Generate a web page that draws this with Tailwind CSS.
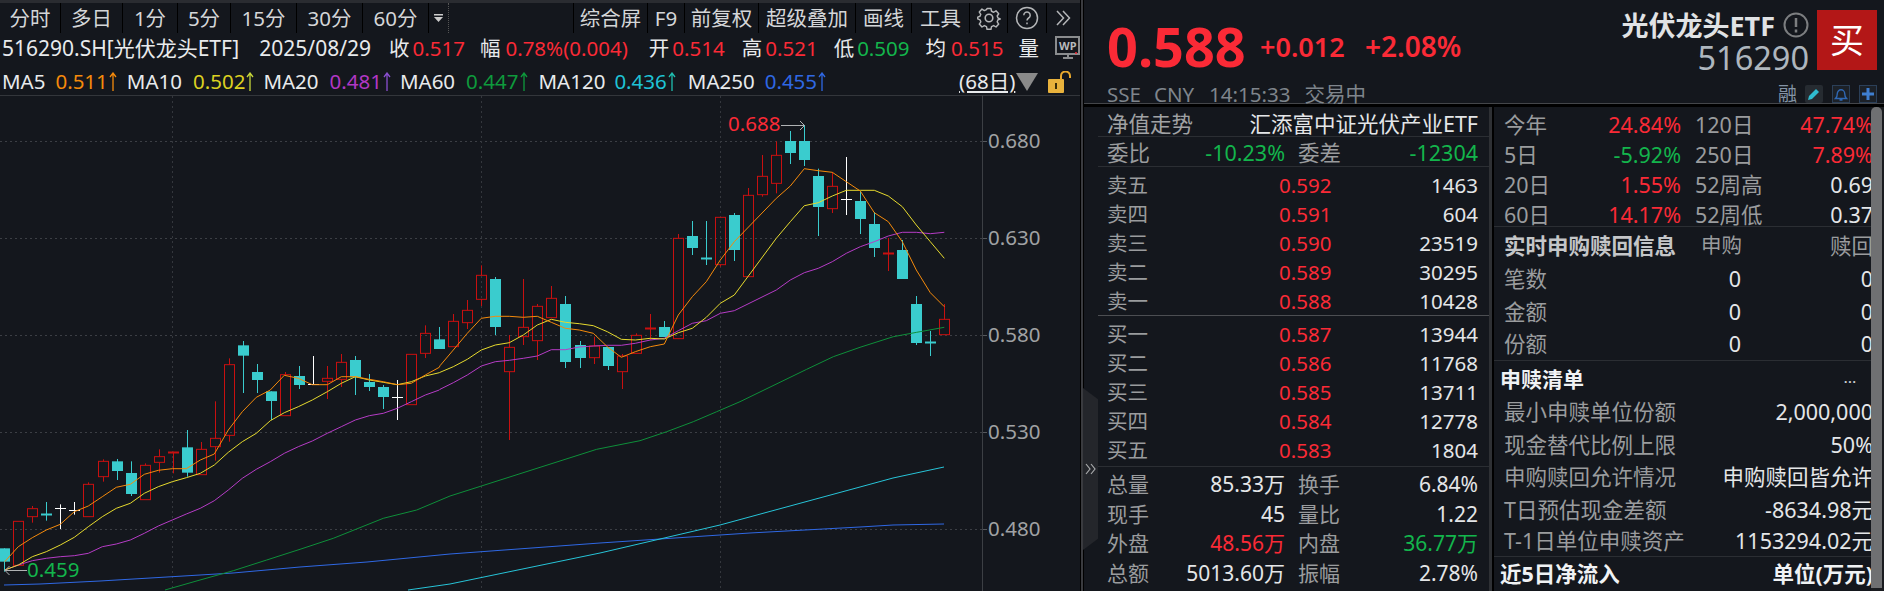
<!DOCTYPE html>
<html lang="zh-CN">
<head>
  <meta charset="UTF-8">
  <title>光伏龙头ETF 516290</title>
  <script src="https://cdn.jsdelivr.net/npm/@tailwindcss/browser@4"></script>
</head>
<body class="bg-[#14171d] text-[#e4e6e8] text-[20.5px] leading-none font-['Noto_Sans','Noto_Sans_CJK_SC',sans-serif] overflow-hidden">
<div class="flex w-[1884px] h-[591px] overflow-hidden">

  <!-- 左侧 K线区 -->
  <div class="w-[1080px] shrink-0 flex flex-col">
    <div class="h-[3px] shrink-0 bg-[#2a2c31]"></div>
    <!-- 工具栏 -->
    <div class="h-[30px] shrink-0 flex items-stretch text-[#d4d6d8] text-center">
      <div class="w-[61px] border-r border-black flex items-center justify-center">分时</div>
      <div class="w-[62px] border-r border-black flex items-center justify-center">多日</div>
      <div class="w-[55px] border-r border-black flex items-center justify-center">1分</div>
      <div class="w-[53px] border-r border-black flex items-center justify-center">5分</div>
      <div class="w-[66px] border-r border-black flex items-center justify-center">15分</div>
      <div class="w-[66px] border-r border-black flex items-center justify-center">30分</div>
      <div class="w-[66px] border-r border-black flex items-center justify-center">60分</div>
      <div class="w-[20px] border-r border-dotted border-[#555] flex items-center justify-center">
        <svg width="9" height="9" viewBox="0 0 9 9"><path d="M0 0h9v1.500H0z" fill="#ccc"/><path d="M0 3h9L4.500 8z" fill="#ccc"/></svg>
      </div>
      <div class="w-[124px]"></div>
      <div class="w-[75px] border-x border-black flex items-center justify-center">综合屏</div>
      <div class="w-[37px] border-r border-black flex items-center justify-center">F9</div>
      <div class="w-[74px] border-r border-black flex items-center justify-center">前复权</div>
      <div class="w-[97px] border-r border-black flex items-center justify-center">超级叠加</div>
      <div class="w-[56px] border-r border-black flex items-center justify-center">画线</div>
      <div class="w-[58px] border-r border-black flex items-center justify-center">工具</div>
      <div class="w-[38px] border-r border-black flex items-center justify-center">
        <svg width="24" height="24" viewBox="0 0 24 24" fill="none" stroke="#b4b6b8" stroke-width="1.600" stroke-linejoin="round"><path d="M9.800 1.500h4.400l.6 3 2.400 1.100 2.600-1.600 3 3.300-1.700 2.500.9 2.200 2.500.9v.2l-2.500.9-.9 2.200 1.700 2.500-3 3.300-2.600-1.600-2.400 1.100-.6 3H9.800l-.6-3-2.400-1.100-2.600 1.600-3-3.300 1.700-2.500-.9-2.200L-.5 13v-2l2.500-.9.900-2.200-1.700-2.500 3-3.300 2.600 1.600 2.400-1.100z" transform="translate(1.200 1.200) scale(.9)"/><circle cx="12" cy="12" r="3.800"/></svg>
      </div>
      <div class="w-[39px] border-r border-black flex items-center justify-center">
        <svg width="24" height="24" viewBox="0 0 24 24" fill="none" stroke="#b4b6b8" stroke-width="1.500"><circle cx="12" cy="12" r="10.500"/><path d="M8.800 9.200a3.200 3.200 0 1 1 4.800 2.800c-1.100.7-1.600 1.200-1.600 2.600"/><path d="M12 16.500v1.800"/></svg>
      </div>
      <div class="flex-1 flex items-center pl-[8px]">
        <svg width="16" height="16" viewBox="0 0 16 16" fill="none" stroke="#b4b6b8" stroke-width="1.500"><path d="M2 1l6.500 7L2 15M8 1l6.500 7L8 15"/></svg>
      </div>
    </div>
    <!-- 行情信息 -->
    <div class="h-[31px] shrink-0 flex items-center text-[#e8eaec] whitespace-nowrap pl-[2px]">
      <span class="text-[21px]">516290.SH[光伏龙头ETF]</span>
      <span class="ml-[20px] text-[21px]">2025/08/29</span>
      <span class="ml-[18px]">收</span><span class="ml-[3px] text-[#fa2a36]">0.517</span>
      <span class="ml-[15px]">幅</span><span class="ml-[5px] text-[#fa2a36]">0.78%(0.004)</span>
      <span class="ml-[21px]">开</span><span class="ml-[3px] text-[#fa2a36]">0.514</span>
      <span class="ml-[17px]">高</span><span class="ml-[3px] text-[#fa2a36]">0.521</span>
      <span class="ml-[16px]">低</span><span class="ml-[3px] text-[#13b54c]">0.509</span>
      <span class="ml-[16px]">均</span><span class="ml-[5px] text-[#fa2a36]">0.515</span>
      <span class="ml-[15px]">量</span>
      <svg class="ml-[16px] shrink-0" width="28" height="26" viewBox="0 0 28 26"><rect x="1" y="1" width="23" height="17" fill="none" stroke="#8a8c8e" stroke-width="2"/><text x="4" y="14" font-size="11" font-weight="700" fill="#b8babc">WP</text><path d="M8 22h10M13 18v4" stroke="#8a8c8e" stroke-width="2"/><circle cx="21" cy="17" r="1" fill="#fa2a36"/><circle cx="26" cy="17" r="1" fill="#fa2a36"/></svg>
    </div>
    <div class="h-[31px] shrink-0 flex items-center text-[#e8eaec] whitespace-nowrap pl-[2px] pt-[4px]">
      <span>MA5</span><span class="ml-[10px] text-[#f58a0b]">0.511</span><svg class="shrink-0" width="10" height="19" viewBox="0 0 10 19" fill="none" stroke="#f58a0b" stroke-width="1.300"><path d="M5 1v18M2 5l3-4 3 4"/></svg>
      <span class="ml-[9px]">MA10</span><span class="ml-[11px] text-[#dcd121]">0.502</span><svg class="shrink-0" width="10" height="19" viewBox="0 0 10 19" fill="none" stroke="#c6d63a" stroke-width="1.300"><path d="M5 1v18M2 5l3-4 3 4"/></svg>
      <span class="ml-[8px]">MA20</span><span class="ml-[11px] text-[#b237c4]">0.481</span><svg class="shrink-0" width="10" height="19" viewBox="0 0 10 19" fill="none" stroke="#8a4fd0" stroke-width="1.300"><path d="M5 1v18M2 5l3-4 3 4"/></svg>
      <span class="ml-[8px]">MA60</span><span class="ml-[11px] text-[#0e9a3c]">0.447</span><svg class="shrink-0" width="10" height="19" viewBox="0 0 10 19" fill="none" stroke="#0e9a3c" stroke-width="1.300"><path d="M5 1v18M2 5l3-4 3 4"/></svg>
      <span class="ml-[10px]">MA120</span><span class="ml-[9px] text-[#1fc3d6]">0.436</span><svg class="shrink-0" width="10" height="19" viewBox="0 0 10 19" fill="none" stroke="#1fbfb0" stroke-width="1.300"><path d="M5 1v18M2 5l3-4 3 4"/></svg>
      <span class="ml-[11px]">MA250</span><span class="ml-[10px] text-[#2f68e4]">0.455</span><svg class="shrink-0" width="10" height="19" viewBox="0 0 10 19" fill="none" stroke="#2f68e4" stroke-width="1.300"><path d="M5 1v18M2 5l3-4 3 4"/></svg>
      <span class="ml-[132px] underline underline-offset-2">(68日)</span>
      <svg class="ml-[1px] shrink-0" width="22" height="18" viewBox="0 0 22 18"><path d="M0 0h22L11 18z" fill="#8a8a8a"/></svg>
      <svg class="ml-[10px] shrink-0" width="24" height="22" viewBox="0 0 24 22"><rect x="0" y="8" width="16" height="14" rx="1" fill="#e9b23c"/><rect x="7" y="12" width="2" height="6" fill="#3a2c08"/><path d="M13 9V5a4.500 4.500 0 0 1 9 0v2" fill="none" stroke="#e9a92e" stroke-width="2"/></svg>
    </div>
    <!-- K线图 -->
    <div class="relative flex-1">
      <svg id="chart" class="absolute left-0 top-0" width="1080" height="496" viewBox="0 95 1080 496"></svg>
    </div>
  </div>

  <!-- 分隔条 -->
  <div class="w-[1px] bg-black shrink-0"></div>
  <div class="w-[2px] bg-[#3a3b3f] shrink-0"></div>
  <div class="w-[1px] bg-black shrink-0"></div>

  <!-- 右侧盘口 -->
  <div class="relative flex-1 flex flex-col min-w-0">
    <div class="absolute left-[-1px] top-[388px] w-[15px] h-[162px] bg-[#24262b] [clip-path:polygon(0_0,100%_7%,100%_93%,0_100%)] flex items-center justify-center">
      <svg width="11" height="12" viewBox="0 0 11 12" fill="none" stroke="#a8aaac" stroke-width="1.200"><path d="M1 1l4 5-4 5M6 1l4 5-4 5"/></svg>
    </div>

    <!-- 头部 -->
    <div class="h-[103px] flex border-b border-[#44464a] box-content">
      <div class="pl-[23px] w-[520px] shrink-0">
        <div class="h-[77px] flex items-center text-[#fa2a36] font-bold whitespace-nowrap pt-[15px]">
          <span class="text-[54px] w-[153px]">0.588</span>
          <span class="text-[27px] font-semibold w-[105px]">+0.012</span>
          <span class="text-[28px] font-semibold">+2.08%</span>
        </div>
        <div class="flex items-center h-[26px] text-[#7f858c] whitespace-nowrap pt-[9px]">
          <span>SSE</span><span class="ml-[13px]">CNY</span><span class="ml-[15px]">14:15:33</span><span class="ml-[14px]">交易中</span>
        </div>
      </div>
      <div class="flex-1 flex justify-end relative pr-[7px]">
        <div class="flex flex-col items-end pr-[8px]">
          <div class="flex items-center h-[46px] pt-[4px]">
            <span class="text-[27px] font-bold text-[#e0e2e4]">光伏龙头ETF</span>
            <svg class="ml-[8px]" width="26" height="26" viewBox="0 0 26 26" fill="none" stroke="#7c7e80" stroke-width="2"><circle cx="13" cy="13" r="11.500"/><path d="M13 6v9M13 17.500v3" stroke-width="2.500"/></svg>
          </div>
          <div class="text-[32.5px] text-[#aeb6be] h-[28px] flex items-center mt-[-2px]">516290</div>
        </div>
        <div class="mt-[10px] w-[60px] h-[60px] bg-[#b31717] text-white text-[34px] flex items-center justify-center">买</div>
        <div class="absolute right-[7px] top-[85px] flex items-center h-[18px]">
          <span class="text-[#8494a6] text-[19px] mr-[8px]">融</span>
          <div class="w-[18px] h-[18px] bg-[#262b31] rounded-[2px] flex items-center justify-center">
            <svg width="14" height="14" viewBox="0 0 14 14"><path d="M1 13l1-4 7-7 3 3-7 7z" fill="#2fbcd0"/></svg>
          </div>
          <div class="ml-[9px] w-[18px] h-[18px] bg-[#1c2128] border border-[#2b3f58] flex items-center justify-center">
            <svg width="14" height="14" viewBox="0 0 14 14" fill="none" stroke="#2f68b4" stroke-width="1.400"><path d="M1.500 11.500h11c-1.500-1.500-1.800-3-1.800-5a3.700 3.700 0 0 0-7.400 0c0 2-.3 3.500-1.800 5zM5.500 13h3"/></svg>
          </div>
          <div class="ml-[9px] w-[18px] h-[18px] bg-[#1c2128] border border-[#2b3f58] flex items-center justify-center">
            <svg width="14" height="14" viewBox="0 0 14 14"><path d="M5.500 1h3v4.500H13v3H8.500V13h-3V8.500H1v-3h4.500z" fill="#3f7fd0"/></svg>
          </div>
        </div>
      </div>
    </div>
    <div class="h-[3px] bg-black"></div>

    <div class="flex flex-1 min-h-0">
      <!-- 五档盘口 -->
      <div class="w-[391px] ml-[14px] shrink-0 text-[#e4e6e8]">
        <div class="h-[30px] border-b border-[#2b2e33] flex items-center justify-between pl-[9px] pr-[11px] pt-[4px] text-[21.5px]">
          <span class="text-[#a0a2a4]">净值走势</span><span>汇添富中证光伏产业ETF</span>
        </div>
        <div class="h-[30px] border-b border-[#2b2e33] grid grid-cols-[178px_1fr] items-center pl-[9px] pr-[11px] pt-[3px] text-[21.5px]">
          <div class="flex justify-between"><span class="text-[#9a9c9e]">委比</span><span class="text-[#13b54c]">-10.23%</span></div>
          <div class="flex justify-between pl-[13px]"><span class="text-[#9a9c9e]">委差</span><span class="text-[#13b54c]">-12304</span></div>
        </div>
        <div class="pt-[4px] h-[149px] border-b border-[#4c4e52]">
          <div class="h-[29px] flex items-center pl-[9px] pr-[11px]"><span class="w-[172px] text-[#9a9c9e]">卖五</span><span class="text-[#fa2a36] w-[60px]">0.592</span><span class="flex-1 text-right">1463</span></div>
          <div class="h-[29px] flex items-center pl-[9px] pr-[11px]"><span class="w-[172px] text-[#9a9c9e]">卖四</span><span class="text-[#fa2a36] w-[60px]">0.591</span><span class="flex-1 text-right">604</span></div>
          <div class="h-[29px] flex items-center pl-[9px] pr-[11px]"><span class="w-[172px] text-[#9a9c9e]">卖三</span><span class="text-[#fa2a36] w-[60px]">0.590</span><span class="flex-1 text-right">23519</span></div>
          <div class="h-[29px] flex items-center pl-[9px] pr-[11px]"><span class="w-[172px] text-[#9a9c9e]">卖二</span><span class="text-[#fa2a36] w-[60px]">0.589</span><span class="flex-1 text-right">30295</span></div>
          <div class="h-[29px] flex items-center pl-[9px] pr-[11px]"><span class="w-[172px] text-[#9a9c9e]">卖一</span><span class="text-[#fa2a36] w-[60px]">0.588</span><span class="flex-1 text-right">10428</span></div>
        </div>
        <div class="pt-[4px] h-[151px] border-b border-[#2b2e33]">
          <div class="h-[29px] flex items-center pl-[9px] pr-[11px]"><span class="w-[172px] text-[#9a9c9e]">买一</span><span class="text-[#fa2a36] w-[60px]">0.587</span><span class="flex-1 text-right">13944</span></div>
          <div class="h-[29px] flex items-center pl-[9px] pr-[11px]"><span class="w-[172px] text-[#9a9c9e]">买二</span><span class="text-[#fa2a36] w-[60px]">0.586</span><span class="flex-1 text-right">11768</span></div>
          <div class="h-[29px] flex items-center pl-[9px] pr-[11px]"><span class="w-[172px] text-[#9a9c9e]">买三</span><span class="text-[#fa2a36] w-[60px]">0.585</span><span class="flex-1 text-right">13711</span></div>
          <div class="h-[29px] flex items-center pl-[9px] pr-[11px]"><span class="w-[172px] text-[#9a9c9e]">买四</span><span class="text-[#fa2a36] w-[60px]">0.584</span><span class="flex-1 text-right">12778</span></div>
          <div class="h-[29px] flex items-center pl-[9px] pr-[11px]"><span class="w-[172px] text-[#9a9c9e]">买五</span><span class="text-[#fa2a36] w-[60px]">0.583</span><span class="flex-1 text-right">1804</span></div>
        </div>
        <div class="pt-[3px] text-[21px]">
          <div class="h-[29.5px] grid grid-cols-[178px_1fr] items-center pl-[9px] pr-[11px]"><div class="flex justify-between"><span class="text-[#9a9c9e]">总量</span><span>85.33万</span></div><div class="flex justify-between pl-[13px]"><span class="text-[#9a9c9e]">换手</span><span>6.84%</span></div></div>
          <div class="h-[29.5px] grid grid-cols-[178px_1fr] items-center pl-[9px] pr-[11px]"><div class="flex justify-between"><span class="text-[#9a9c9e]">现手</span><span>45</span></div><div class="flex justify-between pl-[13px]"><span class="text-[#9a9c9e]">量比</span><span>1.22</span></div></div>
          <div class="h-[29.5px] grid grid-cols-[178px_1fr] items-center pl-[9px] pr-[11px]"><div class="flex justify-between"><span class="text-[#9a9c9e]">外盘</span><span class="text-[#fa2a36]">48.56万</span></div><div class="flex justify-between pl-[13px]"><span class="text-[#9a9c9e]">内盘</span><span class="text-[#13b54c]">36.77万</span></div></div>
          <div class="h-[29.5px] grid grid-cols-[178px_1fr] items-center pl-[9px] pr-[11px]"><div class="flex justify-between"><span class="text-[#9a9c9e]">总额</span><span>5013.60万</span></div><div class="flex justify-between pl-[13px]"><span class="text-[#9a9c9e]">振幅</span><span>2.78%</span></div></div>
        </div>
      </div>

      <div class="w-[3px] bg-[#2e3034] shrink-0"></div>
      <div class="w-[2px] bg-black shrink-0"></div>

      <!-- 申赎信息 -->
      <div class="w-[377px] shrink-0 overflow-hidden whitespace-nowrap text-[21.5px]">
        <div class="w-[379px]">
          <div class="border-b border-[#2b2e33] h-[120px] pt-[3px]">
            <div class="h-[30px] flex items-center pl-[10px]"><span class="w-[90px] text-[#9a9c9e]">今年</span><span class="w-[87px] text-right text-[#fa2a36]">24.84%</span><span class="ml-[14px] text-[#9a9c9e]">120日</span><span class="flex-1 text-right text-[#fa2a36]">47.74%</span></div>
            <div class="h-[30px] flex items-center pl-[10px]"><span class="w-[90px] text-[#9a9c9e]">5日</span><span class="w-[87px] text-right text-[#13b54c]">-5.92%</span><span class="ml-[14px] text-[#9a9c9e]">250日</span><span class="flex-1 text-right text-[#fa2a36]">7.89%</span></div>
            <div class="h-[30px] flex items-center pl-[10px]"><span class="w-[90px] text-[#9a9c9e]">20日</span><span class="w-[87px] text-right text-[#fa2a36]">1.55%</span><span class="ml-[14px] text-[#9a9c9e]">52周高</span><span class="flex-1 text-right">0.69</span></div>
            <div class="h-[27px] flex items-center pl-[10px] pt-[2px]"><span class="w-[90px] text-[#9a9c9e]">60日</span><span class="w-[87px] text-right text-[#fa2a36]">14.17%</span><span class="ml-[14px] text-[#9a9c9e]">52周低</span><span class="flex-1 text-right">0.37</span></div>
          </div>
          <div class="border-b border-[#2b2e33] h-[134px] pt-[2px]">
            <div class="h-[33px] flex items-center pl-[10px]"><span class="w-[197px] font-bold text-[#c4c6c8]">实时申购赎回信息</span><span class="text-[#9a9c9e] text-[20.5px]">申购</span><span class="flex-1 text-right text-[#9a9c9e]">赎回</span></div>
            <div class="h-[33px] flex items-center pl-[10px]"><span class="w-[197px] text-[#9a9c9e]">笔数</span><span class="w-[40px] text-right">0</span><span class="flex-1 text-right">0</span></div>
            <div class="h-[33px] flex items-center pl-[10px]"><span class="w-[197px] text-[#9a9c9e]">金额</span><span class="w-[40px] text-right">0</span><span class="flex-1 text-right">0</span></div>
            <div class="h-[32px] flex items-center pl-[10px]"><span class="w-[197px] text-[#9a9c9e]">份额</span><span class="w-[40px] text-right">0</span><span class="flex-1 text-right">0</span></div>
          </div>
          <div class="border-b border-[#2b2e33] h-[196px] pt-[2px]">
            <div class="h-[32.500px] flex items-center justify-between pl-[6px] pr-[16px]"><span class="font-bold text-[#f0f2f4] text-[21px]">申赎清单</span><span class="text-[12px] font-bold tracking-[1px] text-[#d0d2d4]">...</span></div>
            <div class="h-[32.500px] flex items-center justify-between pl-[10px]"><span class="text-[#9a9c9e]">最小申赎单位份额</span><span>2,000,000</span></div>
            <div class="h-[32.500px] flex items-center justify-between pl-[10px]"><span class="text-[#9a9c9e]">现金替代比例上限</span><span>50%</span></div>
            <div class="h-[32.500px] flex items-center justify-between pl-[10px]"><span class="text-[#9a9c9e]">申购赎回允许情况</span><span>申购赎回皆允许</span></div>
            <div class="h-[32.500px] flex items-center justify-between pl-[10px]"><span class="text-[#9a9c9e]">T日预估现金差额</span><span>-8634.98元</span></div>
            <div class="h-[31px] flex items-center justify-between pl-[10px]"><span class="text-[#9a9c9e]">T-1日单位申赎资产</span><span>1153294.02元</span></div>
          </div>
          <div class="h-[33px] flex items-center justify-between pl-[6px] pt-[1px] font-bold text-[#f0f2f4]"><span>近5日净流入</span><span>单位(万元)</span></div>
        </div>
      </div>

      <!-- 滚动条 -->
      <div class="w-[13px] shrink-0 bg-[#1a1c20]">
        <div class="w-[11px] h-[481px] bg-[#6f7072] rounded-t-[5px]"></div>
      </div>
    </div>
  </div>
</div>

<script>
  // 蜡烛: [类型, 最高, 实体上, 实体下, 最低] 都是页面 y 坐标
  const z8 = v => 290 + v / 3, z9 = v => 200 + v / 3, z10 = v => 110 + v / 3;
  const raw = [
    ['c',z8,775,775,815,845],['r',z8,694,694,826,826],['r',z8,648,656,680,698],['x',z8,636,672,672,692],
    ['w',z8,643,655,655,717],['w',z8,636,661,661,674],['r',z8,577,583,680,680],['r',z8,508,514,560,575],
    ['c',z8,507,514,543,570],['c',z8,514,549,612,618],['r',z8,520,526,629,629],['r',z8,478,500,517,548],
    ['y',z8,485,485,485,550],['c',z8,420,472,548,560],['r',z8,456,478,554,554],['r',z8,334,445,470,512],
    ['r',z8,205,224,436,455],['c',z8,153,166,197,309],['c',z8,222,246,270,309],['c',z8,304,304,333,390],
    ['r',z8,246,254,377,377],['c',z8,228,258,285,297],['w',z8,198,281,281,284],['r',z8,228,265,274,327],
    ['r',z8,192,217,268,291],['c',z8,198,210,262,315],['c',z8,252,276,291,303],['c',z8,285,291,321,357],
    ['w',z8,270,322,322,390],['r',z8,193,193,344,344],['r',z8,106,130,190,204],['c',z8,111,148,177,177],
    ['r',z9,342,364,440,440],['r',z9,300,331,368,387],['r',z9,196,226,298,318],['c',z9,231,237,381,405],
    ['r',z9,405,442,515,720],['r',z9,237,382,410,435],['r',z9,312,319,422,480],['r',z9,258,295,353,353],
    ['c',z9,288,312,486,504],['c',z9,423,435,474,504],['r',z9,410,438,473,492],['c',z9,441,441,498,510],
    ['r',z9,462,468,515,567],['r',z9,400,406,460,460],['y',z9,342,384,384,420],['c',z9,363,381,411,411],
    ['r',z10,372,385,686,686],['c',z10,333,378,414,435],['x',z10,333,443,443,465],['r',z10,322,322,464,470],
    ['c',z10,309,315,420,453],['r',z10,234,256,500,500],['r',z10,135,199,254,260],['r',z10,94,136,220,250],
    ['c',z10,63,93,129,162],['c',z10,45,93,150,168],['c',z10,176,198,291,378],['r',z10,187,229,296,309],
    ['w',z10,141,268,268,315],['c',z10,243,273,327,372],['c',z10,306,342,414,441],['y',z10,384,428,428,483],
    ['c',z10,390,420,507,507],['c',z10,558,582,699,705],['x',z10,663,695,695,738],['r',z10,582,628,674,674]
  ];

  const p8 = a => a.map(([x, y]) => [x / 3, z8(y)]);
  const p9 = a => a.map(([x, y]) => [440 + x / 3, z9(y)]);
  const p10 = a => a.map(([x, y]) => [660 + x / 3, z10(y)]);
  const toLine = pts => pts.map(p => p[0].toFixed(1) + ',' + p[1].toFixed(1)).join(' ');

  const ma5 = [...p8([[14,815],[55,770],[97,743],[139,720],[181,703],[223,665],[265,648],[307,620],[349,592],[391,583],[433,553],[475,541],[517,536],[559,536],[601,510],[643,492],[685,420],[727,365],[769,322],[811,300],[853,256],[895,265],[937,284],[982,284],[1024,260],[1066,260],[1108,268],[1150,275],[1192,284],[1234,280],[1276,255],[1318,232]]),
    ...p9([[0,497],[40,450],[82,400],[124,355],[166,349],[208,349],[250,352],[292,349],[334,367],[376,385],[418,390],[460,400],[502,440],[544,472],[586,455],[631,440],[673,432],[715,345],[757,290],[799,245],[841,180],[883,125]]),
    ...p10([[349,265],[391,228],[433,176],[475,182],[517,187],[559,215],[601,243],[643,308],[685,335],[727,395],[769,480],[811,548],[853,590]])];
  const ma10 = [...p8([[14,840],[55,825],[97,800],[139,785],[181,765],[223,742],[265,710],[307,680],[349,655],[391,640],[433,610],[475,590],[517,575],[559,563],[601,550],[643,525],[685,487],[727,455],[769,430],[811,392],[853,368],[895,350],[937,330],[982,305],[1024,280],[1066,260],[1108,270],[1150,277],[1192,284],[1234,275],[1276,258],[1318,248]]),
    ...p9([[0,517],[40,500],[82,478],[124,450],[166,435],[208,428],[250,405],[292,375],[334,358],[376,367],[418,371],[460,377],[502,395],[544,418],[586,420],[631,415],[673,417],[715,398],[757,385],[799,352],[841,310],[883,285]]),
    ...p10([[349,385],[391,335],[433,287],[475,278],[517,258],[559,241],[601,241],[643,241],[685,258],[727,290],[769,345],[811,395],[853,445]])];
  const ma20 = [...p8([[14,840],[55,825],[97,812],[139,805],[181,800],[223,797],[265,790],[307,770],[349,762],[391,750],[433,730],[475,708],[517,690],[559,672],[601,655],[643,632],[685,600],[727,565],[769,538],[811,515],[853,490],[895,470],[937,453],[982,430],[1024,410],[1066,390],[1108,377],[1150,370],[1192,355],[1234,335],[1276,315],[1318,300]]),
    ...p9([[0,568],[40,548],[82,525],[124,498],[166,485],[208,481],[250,475],[292,468],[334,449],[376,449],[418,441],[460,438],[502,436],[544,436],[586,430],[631,420],[673,415],[715,392],[757,370],[799,362],[841,340],[883,332]]),
    ...p10([[349,540],[391,510],[433,488],[475,475],[517,455],[559,430],[601,410],[643,395],[685,378],[727,367],[769,367],[811,371],[853,367]])];
  const ma60 = [...p8([[495,900],[600,870],[700,842],[800,810],[900,778],[1000,745],[1150,685],[1250,660],[1350,618]]),
    ...p9([[470,748],[600,722],[680,695],[760,665],[830,635],[900,605]]),
    ...p10([[440,778],[520,740],[600,712],[700,680],[770,667],[853,652]])];
  const ma120 = [[408,590],[450,584],[600,553],[720,525],[860,487],[893,478],[944,467]];
  const ma250 = [[4,585],[40,584],[100,581],[167,577],[233,573],[300,567],[367,562],[450,554],[600,543],[750,533],[860,527],[893,525],[944,524]];

  let s = '';
  // 网格
  [141.5, 238.5, 335.5, 432.5, 529.5].forEach(y => {
    s += `<line x1="0" x2="982" y1="${y}" y2="${y}" stroke="#3c3f45" stroke-dasharray="2 3"/>`;
    s += `<line x1="982" x2="987" y1="${y}" y2="${y}" stroke="#55585d"/>`;
  });
  [172.5, 481.5, 720.5].forEach(x => {
    s += `<line x1="${x}" x2="${x}" y1="96" y2="591" stroke="#34373d" stroke-dasharray="2 3"/>`;
  });
  s += `<line x1="0" x2="1080" y1="95.500" y2="95.500" stroke="#33363b"/>`;
  s += `<line x1="982.500" x2="982.500" y1="95" y2="591" stroke="#3c3f44"/>`;
  [['0.680',141.5],['0.630',238.5],['0.580',335.5],['0.530',432.5],['0.480',529.5]].forEach(([t, y]) => {
    s += `<text x="988" y="${y + 6}" font-size="20.500" fill="#a0a2a4">${t}</text>`;
  });

  // 蜡烛
  const RED = '#c81010', CYAN = '#3accce';
  raw.forEach((d, i) => {
    const [t, f, h, top, bot, low] = d;
    const x = Math.round(4.3 + 14.03 * i) + 0.5;
    const yh = f(h), yt = f(top), yb = f(bot), yl = f(low);
    if (t === 'c') {
      s += `<line x1="${x}" x2="${x}" y1="${yh}" y2="${yl}" stroke="${CYAN}"/>`;
      s += `<rect x="${x - 5.5}" y="${yt}" width="11" height="${yb - yt}" fill="${CYAN}"/>`;
    } else if (t === 'r') {
      s += `<line x1="${x}" x2="${x}" y1="${yh}" y2="${yt}" stroke="${RED}"/>`;
      s += `<line x1="${x}" x2="${x}" y1="${yb}" y2="${yl}" stroke="${RED}"/>`;
      s += `<rect x="${x - 5}" y="${yt}" width="10" height="${yb - yt}" fill="none" stroke="${RED}"/>`;
    } else {
      const c = t === 'w' ? '#ffffff' : t === 'x' ? CYAN : RED;
      s += `<line x1="${x}" x2="${x}" y1="${yh}" y2="${yl}" stroke="${c}"/>`;
      s += `<line x1="${x - 5.5}" x2="${x + 5.5}" y1="${Math.round(yt) + .5}" y2="${Math.round(yt) + .5}" stroke="${c}" stroke-width="${t === 'w' ? 1 : 2}"/>`;
    }
  });

  // 均线
  [[ma250, '#2f68e4'], [ma120, '#27c4d8'], [ma60, '#0e8f3a'], [ma20, '#b63cc6'], [ma10, '#e6da2e'], [ma5, '#f58a0b']].forEach(([pts, c]) => {
    s += `<polyline points="${toLine(pts)}" fill="none" stroke="${c}" stroke-width="1"/>`;
  });

  // 高低点标注
  s += `<text x="728" y="131" font-size="20.500" fill="#fa2a36">0.688</text>`;
  s += `<path d="M781 125.500h23M800 121l4.500 4.500-4.500 4.500" fill="none" stroke="#b0b2b4"/>`;
  s += `<text x="27" y="577" font-size="20.500" fill="#13b54c">0.459</text>`;
  s += `<path d="M27 570.500H5M9.500 566L5 570.500l4.500 4.500" fill="none" stroke="#b0b2b4"/>`;

  document.getElementById('chart').innerHTML = s;
</script>
</body>
</html>
